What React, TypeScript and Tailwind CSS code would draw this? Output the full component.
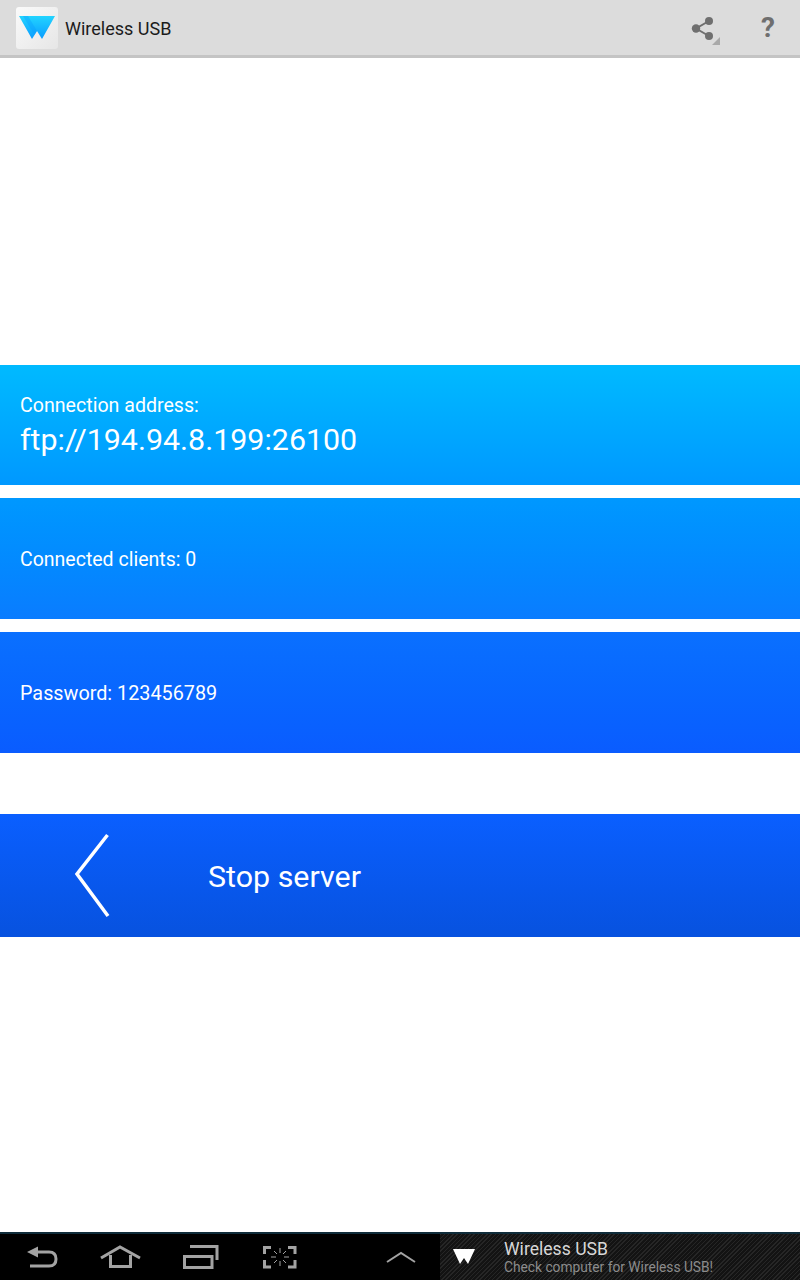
function ShareIcon() {
  return (
    <svg width="34" height="34" viewBox="0 0 34 34" className="block">
      <path d="M20 5 L7 12.5 L20 20" fill="none" stroke="#6f6f6f" strokeWidth="2" />
      <circle cx="20" cy="5" r="4" fill="#6f6f6f" />
      <circle cx="7" cy="12.5" r="4.2" fill="#6f6f6f" />
      <circle cx="20" cy="20" r="4" fill="#6f6f6f" />
      <path d="M31 21 V29 H23 Z" fill="#a9a9a9" />
    </svg>
  );
}

function AppLogo() {
  return (
    <svg width="36" height="24" viewBox="0 0 36 24" className="block">
      <defs>
        <linearGradient id="logoBlue" x1="0" y1="0" x2="0" y2="1">
          <stop offset="0" stopColor="#22d4ff" />
          <stop offset="1" stopColor="#0a9cff" />
        </linearGradient>
      </defs>
      <path d="M0 0 H36 L23 23 L18 15 L13 23 Z" fill="url(#logoBlue)" />
      <path d="M9 0 L18 15 L15.5 19 L4 0 Z" fill="#0a9cff" opacity="0.35" />
    </svg>
  );
}

function NavIcons() {
  return (
    <div className="flex h-full w-[440px] items-center bg-black">
      <svg width="440" height="48" viewBox="0 0 440 48" fill="none" stroke="#a3a3a3" strokeWidth="3" className="block shrink-0">
        <path d="M36 19 H49 Q56 19 56 26 Q56 33 49 33 H30" />
        <path d="M27 19 L38 13.5 V24.5 Z" fill="#a3a3a3" stroke="none" />
        <path d="M101 25 L120 14 L140 25" />
        <path d="M110.5 22 V33.5 H130.5 V22" />
        <path d="M184.5 23.5 H212 V34.5 H184.5 Z" />
        <path d="M190 13.5 H217 V27" />
        <path d="M271 14.5 H264.5 V21 M288 14.5 H295 V21 M264.5 27 V34 H271 M295 27 V34 H288" strokeWidth="3" />
        <path d="M280 15 V20 M280 28 V33 M271 24 H276 M284 24 H289 M274 18 L277 21 M286 18 L283 21 M274 30 L277 27 M286 30 L283 27" strokeWidth="1" />
        <path d="M387 29 L401 20 L415 29" strokeWidth="2" />
      </svg>
    </div>
  );
}

function Panel({ className, children }: { className: string; children: React.ReactNode }) {
  return <div className={`flex flex-col justify-center px-5 text-white ${className}`}>{children}</div>;
}

export default function App() {
  return (
    <div className="flex h-[1280px] w-[800px] flex-col overflow-hidden bg-white font-['Roboto',sans-serif]">
      <header className="flex h-[58px] shrink-0 items-center border-b-[3px] border-[#c4c4c4] bg-[#dcdcdc] pl-4">
        <div className="flex h-[42px] w-[42px] items-center justify-center rounded-[3px] bg-gradient-to-br from-[#fafafa] to-[#e6e6e6]">
          <AppLogo />
        </div>
        <span className="ml-[7px] mt-[2px] text-[18px] text-[#1b1b1b]">Wireless USB</span>
        <div className="ml-auto mr-[20px] flex items-center">
          <div className="mt-[10px]">
            <ShareIcon />
          </div>
          <span className="ml-[33px] w-[24px] text-center text-[28px] font-bold leading-none text-[#6f6f6f]">?</span>
        </div>
      </header>

      <div className="mt-[307px] flex flex-col">
        <Panel className="h-[120px] bg-gradient-to-b from-[#00baff] to-[#0098ff] pt-[2px]">
          <span className="pt-[1px] text-[19.6px] leading-[27px]">Connection address:</span>
          <span className="text-[30.4px] leading-[42px]">ftp://194.94.8.199:26100</span>
        </Panel>
        <Panel className="mt-[13px] h-[121px] bg-gradient-to-b from-[#0098ff] to-[#0a7cff] pt-[2px]">
          <span className="text-[19.5px]">Connected clients: 0</span>
        </Panel>
        <Panel className="mt-[13px] h-[121px] bg-gradient-to-b from-[#0a70ff] to-[#0a5cff] pt-[2px]">
          <span className="text-[19.8px]">Password: 123456789</span>
        </Panel>
      </div>

      <div className="mt-[61px] flex h-[123px] items-center bg-gradient-to-b from-[#0a5fff] to-[#0752df] text-white">
        <svg width="60" height="90" viewBox="0 0 60 90" fill="none" stroke="#fff" strokeWidth="3.5" className="ml-[60px] block">
          <path d="M47.5 4 L17 43 L48 85" />
        </svg>
        <span className="ml-[88px] pt-[2px] text-[30.4px]">Stop server</span>
      </div>

      <footer className="mt-auto flex h-[48px] shrink-0 border-t-2 border-[#0f2c3a] bg-black">
        <NavIcons />
        <div className="flex flex-1 items-center bg-[#1c1c1c] bg-[repeating-linear-gradient(135deg,#262626_0px,#262626_1px,#131313_1px,#131313_3px)]">
          <svg width="22" height="16" viewBox="0 0 22 16" className="ml-[13px] block">
            <path d="M0 0 H22 L15 15 L11 9 L7 15 Z" fill="#fff" />
          </svg>
          <div className="ml-[29px] flex flex-col">
            <span className="text-[17.6px] leading-[20px] text-[#d8d8d8]">Wireless USB</span>
            <span className="text-[13.75px] leading-[16px] text-[#8c8c8c]">Check computer for Wireless USB!</span>
          </div>
        </div>
      </footer>
    </div>
  );
}
